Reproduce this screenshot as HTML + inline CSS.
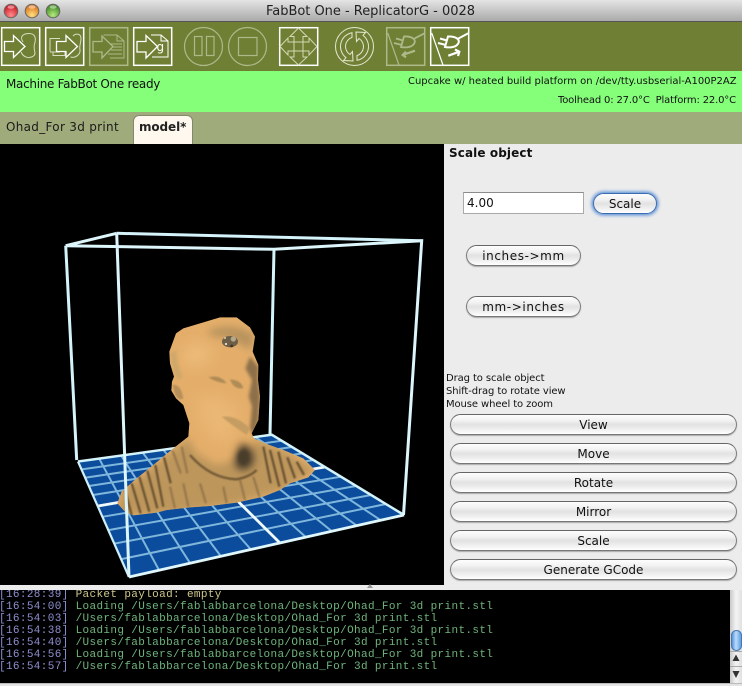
<!DOCTYPE html>
<html><head><meta charset="utf-8"><style>
html,body{margin:0;padding:0;width:742px;height:686px;overflow:hidden;background:#ececec}
body{position:relative;font-family:"DejaVu Sans","Liberation Sans",sans-serif;color:#111}
.a{position:absolute;white-space:pre}
.btn{position:absolute;box-sizing:border-box;height:21px;border:1px solid #7d7d7d;border-top-color:#666;border-bottom-color:#777;border-radius:11px;background:linear-gradient(#fdfdfd,#f2f2f2 30%,#e2e2e2 50%,#ececec 70%,#fff);text-align:center;font-size:12px;line-height:20px;color:#111;box-shadow:0 1px 1px #aaa}
.log{position:absolute;left:-1px;font-family:"Liberation Mono",monospace;font-size:11px;letter-spacing:.36px;line-height:12px;white-space:pre;color:#6fb57c}
.log b{font-weight:normal;color:#8f8fd0}
</style></head><body>
<div class="a" style="left:0;top:0;width:742px;height:21px;background:linear-gradient(#e4e4e4,#aaaaaa);border-bottom:1px solid #555"></div>
<svg class="a" style="left:0;top:0" width="70" height="22"><defs>
<radialGradient id="r" cx=".5" cy=".8" r=".75"><stop offset="0" stop-color="#ff8c8c"/><stop offset="1" stop-color="#c8101a"/></radialGradient>
<radialGradient id="o" cx=".5" cy=".8" r=".75"><stop offset="0" stop-color="#ffe080"/><stop offset="1" stop-color="#d86c14"/></radialGradient>
<radialGradient id="g" cx=".5" cy=".8" r=".75"><stop offset="0" stop-color="#b8ea80"/><stop offset="1" stop-color="#34841c"/></radialGradient></defs>
<circle cx="11" cy="11" r="6.8" fill="url(#r)" stroke="#666"/><circle cx="32" cy="11" r="6.8" fill="url(#o)" stroke="#666"/><circle cx="53" cy="11" r="6.8" fill="url(#g)" stroke="#666"/>
<ellipse cx="11" cy="7" rx="3.5" ry="1.8" fill="#fff" opacity=".45"/><ellipse cx="32" cy="7" rx="3.5" ry="1.8" fill="#fff" opacity=".45"/><ellipse cx="53" cy="7" rx="3.5" ry="1.8" fill="#fff" opacity=".45"/></svg>
<div class="a" style="left:266px;top:4px;font-size:13px;line-height:16px;letter-spacing:-.02px;color:#222">FabBot One - ReplicatorG - 0028</div>

<div class="a" style="left:0;top:22px;width:742px;height:49px;background:#6f8035"></div>
<svg class="a" style="left:0;top:22px" width="480" height="49" viewBox="0 22 480 49" fill="none" stroke="#fff" stroke-width="1">
<g stroke-width="1.5"><rect x="1.700" y="27.700" width="38" height="37.600"/><rect x="45.700" y="27.700" width="38" height="37.600"/><rect x="133.700" y="27.700" width="38" height="37.600"/><rect x="279.700" y="27.700" width="38" height="37.600"/><rect x="430.700" y="27.700" width="38" height="37.600"/></g>
<g stroke="#aeb98a" stroke-width="1.500"><rect x="89.700" y="27.700" width="38" height="37.600"/><rect x="386.700" y="27.700" width="38" height="37.600"/></g>
<path d="M4.500 41.500H13.500V35.500L25 46.500 13.500 57.500V51.500H4.500Z" stroke-width="1.300"/>
<path d="M23 42C19 36 24 33.500 29 33.500 35 33.500 36.500 38 34.500 44 33 50 36.500 53 34 55.500 30 59 23.500 58 21 52" stroke="#d8dcc0"/>
<path d="M50 51.500V38.500H60M60 52H50M53 51.500V55.500H65V52" stroke="#d8dcc0"/>
<path d="M56.500 41.500H66V35.500L77.500 46.500 66 57.500V51.500H56.500Z" stroke-width="1.300"/>
<path d="M73 36C76 33 81 33.500 81 38.500 81 43 79 46 80 50 80.500 54 76 58.500 70.500 57" stroke="#d8dcc0"/>
<g stroke="#aeb98a"><path d="M93 41.500H102V36L113 46.500 102 58V52H93Z" stroke-width="1.300"/><path d="M103.500 35H117L124 41V58H110M117 35V41H124M111 44H122M113 47H122M111 50H122M108 54H122"/></g>
<path d="M137 41.500H146V35.500L157.500 46.500 146 58V52H137Z" stroke-width="1.300"/>
<path d="M151 35H161L168 41V57H152M161 35V41H168"/><text x="156.500" y="51" font-family="DejaVu Sans,sans-serif" font-size="12" fill="#fff" stroke="none">g</text>
<g stroke="#aeb98a" stroke-width="1.200"><circle cx="203.500" cy="46.500" r="19"/><circle cx="247.500" cy="46.500" r="19"/><rect x="194.500" y="36.500" width="7.500" height="19"/><rect x="206.500" y="36.500" width="7.500" height="19"/><rect x="238.500" y="37.500" width="18.500" height="18"/></g>
<g stroke="#d3d9b4"><path d="M298.500 28L307 36.500H303V42H309V38L317 46.500 309 55V51H303V57H307L298.500 65 290 57H294V51H288V55L280 46.500 288 38V42H294V36.500H290Z"/><path d="M294 42H303V51H294Z"/></g>
<g stroke="#e4e8cf"><circle cx="354.500" cy="46.500" r="19"/><path id="rb" d="M352 32.700A14 14 0 0 0 346 57.600L343.500 60.500 353 61 352.500 51.500 350 54.500A9.500 9.500 0 0 1 352 37.400Z"/><use href="#rb" transform="rotate(180 354.500 46.500)"/></g>
<g stroke="#aeb98a" stroke-width="1.800"><path d="M387.700 33L399 65" stroke-width="1.200"/><path d="M424.500 33.300L413.500 39M404 36.500C412 36 418 40 413 45 411 47 406 48 401 47ZM396 38.500L403 40.500M394 43L402 45"/><path d="M415 50.700L402.700 55M406 51.700L402.700 55 406 57.300" stroke-width="2.200"/></g>
<g stroke="#fff" stroke-width="2"><path d="M431.700 33L443 65" stroke-width="1.200"/><path d="M468.300 33.300L457.500 39M448 36.500C456 36 462 40 457 45 455 47 450 48 445 47ZM440 38.500L447 40.500M438 43L446 45"/><path d="M448.300 55.700L459.300 51.700M455 49.500L459.300 51.700 458 56" stroke-width="2.200"/></g>
</svg>

<div class="a" style="left:0;top:71px;width:742px;height:41px;background:#85ff7a"></div>
<div class="a" style="left:6px;top:76px;font-size:12px;line-height:16px;letter-spacing:-.3px">Machine FabBot One ready</div>
<div class="a" style="left:408px;top:75px;font-size:10px;line-height:14px;letter-spacing:-.01px">Cupcake w/ heated build platform on /dev/tty.usbserial-A100P2AZ</div>
<div class="a" style="left:558px;top:94px;font-size:10px;line-height:14px;letter-spacing:-.17px">Toolhead 0: 27.0°C  Platform: 22.0°C</div>

<div class="a" style="left:0;top:112px;width:742px;height:32px;background:#a0ab7c"></div>
<div class="a" style="left:6px;top:119px;font-size:12px;line-height:16px;letter-spacing:.3px;color:#1a1a1a">Ohad_For 3d print</div>
<div class="a" style="left:133px;top:115px;width:58px;height:29px;background:#fff8ee;border:1px solid #85886f;border-bottom:0;border-radius:6px 6px 0 0"></div>
<div class="a" style="left:139px;top:119px;font-size:12px;line-height:16px;font-weight:bold;letter-spacing:-.1px;color:#222">model*</div>

<svg class="a" style="left:0;top:144px" width="444" height="441" viewBox="0 144 444 441">
<defs>
<filter id="b1" x="-20%" y="-20%" width="140%" height="140%"><feGaussianBlur stdDeviation="2.200"/></filter>
<filter id="b2" x="-30%" y="-30%" width="160%" height="160%"><feGaussianBlur stdDeviation="5"/></filter>
<filter id="b5" x="-40%" y="-40%" width="180%" height="180%"><feGaussianBlur stdDeviation="12"/></filter>
<filter id="b10" x="-50%" y="-50%" width="200%" height="200%"><feGaussianBlur stdDeviation="22"/></filter>
<clipPath id="sil"><path id="silp" d="M510 292L560 292 600 322 615 350 608 395 625 435 624 480 630 530 625 600 605 640 612 655 650 672 700 690 760 715 795 750 775 772 720 790 690 810 640 830 560 848 480 858 420 862 350 870 320 878 250 886 225 875 202 850 215 815 260 775 310 735 370 685 415 650 418 610 400 555 378 535 364 512 366 485 372 470 360 430 358 395 378 340 400 325 450 310Z"/></clipPath>
</defs>
<rect x="0" y="144" width="444" height="441" fill="#000"/>
<path d="M78 461.500L271.700 434.700 404 515 129 577Z" fill="#0b4c9c"/>
<g stroke="#7fb6dc" stroke-width="2" fill="none">
<path d="M99 458.300L159 570.100M121 455.300L190 563.100M142.500 452.400L221 556.400M163 449.600L251 549.600M202 444.200L306 537.200M221 441.600L332 531.400M238 439.300L357 525.800M255 437L381 520.400"/>
<path d="M81 469.500L281.600 440.700M85 477.700L292 447M89 486L302.500 453.400M93 495L313.500 460M103 516.700L341 476.700M109 530L356 486M115 543.500L371 495M122 559L386 504"/>
</g>
<g stroke="#f0fafd" stroke-width="2.800" fill="none"><path d="M183 446.800L280 543M98 506L325 467"/></g>
<path d="M78 461.500L271.700 434.700 404 515" stroke="#d4f3fa" stroke-width="2.500" fill="none"/>
<path d="M116.700 233.300L421.700 240.700M274 249.300L270 434.300M65.700 245.700L76.700 460" stroke="#d4f3fa" stroke-width="3" fill="none"/>

<g transform="translate(50 220) scale(.33333)">
<use href="#silp" fill="#e4ae6a"/>
<g clip-path="url(#sil)">
<path d="M370 690L415 655 440 700 500 735 600 705 612 660 700 690 795 750 700 810 560 850 320 885 200 880 215 815Z" fill="#bd965c" filter="url(#b5)"/>
<path d="M400 395Q450 350 490 400 440 450 405 430Z" fill="#efbe7c" filter="url(#b10)"/>
<path d="M440 540Q500 510 560 570 570 640 520 670 450 640 440 540Z" fill="#ebb775" filter="url(#b10)"/>
<path d="M470 335Q540 300 615 345L600 392Q540 345 490 350Z" fill="#b8935d" filter="url(#b5)"/>
<path d="M600 410L625 440 624 480 630 530 625 600 610 645 600 625 606 560 596 530 606 480 586 445Z" fill="#8d7049" filter="url(#b2)"/>
<path d="M475 472Q510 462 530 490 505 490 475 472ZM540 478Q575 480 580 505 550 508 540 478Z" fill="#b08b55" filter="url(#b1)"/>
<path d="M515 590Q560 585 600 625L590 645Q540 612 515 590Z" fill="#c59d62" filter="url(#b1)"/>
<path d="M368 495Q392 490 400 535 385 545 374 520Z" fill="#b8915a" filter="url(#b1)"/>
<path d="M360 400Q365 450 385 480L398 470Q378 430 380 390Z" fill="#cfa86b" filter="url(#b2)"/>
<path d="M575 670Q620 680 610 730 590 760 560 745 545 710 575 670Z" fill="#4d412e" filter="url(#b5)"/>
<ellipse cx="580" cy="712" rx="16" ry="22" fill="#4a3e2c" filter="url(#b2)"/>
<path d="M420 705Q480 775 560 778 600 770 620 750" fill="none" stroke="#715834" stroke-width="7" filter="url(#b1)"/>
<g fill="none" stroke="#6a5230" stroke-width="7" filter="url(#b1)">
<path d="M225 810L245 885M245 790L272 880M268 770L298 875M292 752L322 865M316 735L340 860M342 712L362 790M640 680L662 790M660 690L688 800M685 695L708 790M712 712L735 775M740 725L762 765"/>
<path d="M368 692L392 760M395 680L412 760M610 770L628 830M570 780L585 840M450 790L468 850M520 800L530 850M400 790L415 860M360 800L375 865" opacity=".45"/>
</g>
<ellipse cx="540" cy="365" rx="24" ry="17" fill="#6d5f47"/>
<circle cx="550" cy="357" r="8" fill="#b4a78a"/>
<circle cx="528" cy="372" r="3.500" fill="#e8e0c8"/><circle cx="545" cy="378" r="4" fill="#3a3226"/><circle cx="525" cy="354" r="3" fill="#d8cca8"/>
</g>
</g>

<path d="M129 577L404 515" stroke="#dff7fb" stroke-width="2.800" fill="none"/>
<path d="M78 461.500L129 577" stroke="#cfeff8" stroke-width="2.200" fill="none"/>
<path d="M65.700 245.700L116.700 233.300M65.700 245.700L274 249.300 421.700 240.700 403.500 515M116.700 233.300L129 577" stroke="#dcf6fb" stroke-width="3" fill="none"/>
</svg>

<div class="a" style="left:449px;top:145px;font-size:12px;line-height:16px;font-weight:bold;letter-spacing:.1px">Scale object</div>
<div class="a" style="left:463px;top:192px;width:119px;height:20px;background:#fff;border:1px solid #aaa;border-top-color:#8c8c8c;font-size:12px;line-height:20px;text-indent:3px">4.00</div>
<div class="btn" style="left:593px;top:193px;width:64px;box-shadow:0 0 3px 1.500px #5f92d8;border-color:#3a6cb0">Scale</div>
<div class="btn" style="left:466px;top:245px;width:115px;letter-spacing:.6px">inches-&gt;mm</div>
<div class="btn" style="left:466px;top:296px;width:115px;letter-spacing:.6px">mm-&gt;inches</div>
<div class="a" style="left:446px;top:372px;font-size:10px;line-height:13px;letter-spacing:-.1px">Drag to scale object
Shift-drag to rotate view
Mouse wheel to zoom</div>
<div class="btn" style="left:450px;top:414px;width:287px">View</div>
<div class="btn" style="left:450px;top:443px;width:287px">Move</div>
<div class="btn" style="left:450px;top:472px;width:287px">Rotate</div>
<div class="btn" style="left:450px;top:501px;width:287px">Mirror</div>
<div class="btn" style="left:450px;top:530px;width:287px">Scale</div>
<div class="btn" style="left:450px;top:559px;width:287px">Generate GCode</div>

<svg class="a" style="left:366px;top:584px" width="8" height="5"><path d="M4 0L7 4H1Z" fill="#999"/></svg>

<div class="a" style="left:0;top:590px;width:730px;height:93px;background:#000;overflow:hidden">
<div class="log" style="top:-1px;color:#cfc78a"><b>[16:28:39]</b> Packet payload: empty</div>
<div class="log" style="top:11px"><b>[16:54:00]</b> Loading /Users/fablabbarcelona/Desktop/Ohad_For 3d print.stl</div>
<div class="log" style="top:23px"><b>[16:54:03]</b> /Users/fablabbarcelona/Desktop/Ohad_For 3d print.stl</div>
<div class="log" style="top:35px"><b>[16:54:38]</b> Loading /Users/fablabbarcelona/Desktop/Ohad_For 3d print.stl</div>
<div class="log" style="top:47px"><b>[16:54:40]</b> /Users/fablabbarcelona/Desktop/Ohad_For 3d print.stl</div>
<div class="log" style="top:59px"><b>[16:54:56]</b> Loading /Users/fablabbarcelona/Desktop/Ohad_For 3d print.stl</div>
<div class="log" style="top:71px"><b>[16:54:57]</b> /Users/fablabbarcelona/Desktop/Ohad_For 3d print.stl</div>
</div>
<div class="a" style="left:730px;top:590px;width:12px;height:93px;background:linear-gradient(90deg,#c8c8c8,#f4f4f4 50%,#e0e0e0)"></div>
<div class="a" style="left:731px;top:630px;width:11px;height:21px;border-radius:6px;background:linear-gradient(90deg,#3c7fd8,#bcdcf8 45%,#4c90e0);box-shadow:0 0 0 1px #4a78b0 inset"></div>
<svg class="a" style="left:730px;top:651px" width="12" height="32"><path d="M0 .5H12M0 15.500H12" stroke="#aaa"/><path d="M6 3.500L9.500 10H2.500ZM6 27L2.500 20H9.500Z" fill="#333"/></svg>
<div class="a" style="left:0;top:683px;width:742px;height:3px;background:#e4e4e4;border-top:1px solid #bbb;box-sizing:border-box"></div>
</body></html>
